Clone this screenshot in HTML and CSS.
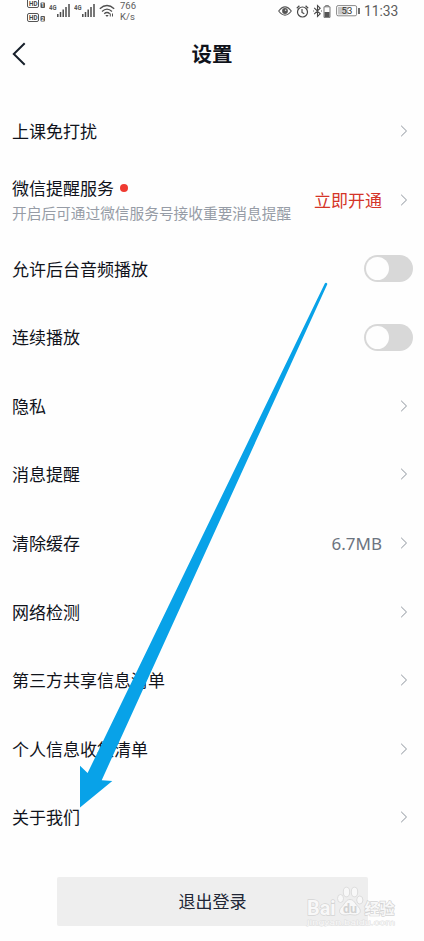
FILE: index.html
```html
<!DOCTYPE html>
<html lang="zh-CN">
<head>
<meta charset="utf-8">
<title>设置</title>
<link rel="stylesheet" href="styles.css">
</head>
<body>
<svg class="defs" aria-hidden="true">
  <symbol id="chevron" viewBox="0 0 8 12"><path d="M1.2 .8 6.5 6 1.2 11.2" fill="none" stroke="#8b929b" stroke-width="1"/></symbol>
  <symbol id="signal" viewBox="0 0 22 18">
    <text x="0" y="9.5" font-size="6.5" font-weight="700" textLength="7.5" lengthAdjust="spacingAndGlyphs" fill="#555">4G</text>
    <path d="M8.8 14v3M11.5 12v5M14.2 9.5v7.5M17 7v10M20 4v13" stroke="#4c4c4c" stroke-width="1.5"/>
  </symbol>
</svg>
<main class="screen">
  <header class="status">
    <div class="status-left">
      <svg class="hd" viewBox="0 0 20 23">
        <g fill="none" stroke="#555" stroke-width="1"><path d="M.5 0v6q0 1.5 1.5 1.5h8q1.5 0 1.5-1.5V0"/><rect x=".5" y="13.5" width="11" height="8" rx="1.5"/></g>
        <g fill="#444" font-weight="700"><text x="2" y="6.4" font-size="7.5" textLength="8.5" lengthAdjust="spacingAndGlyphs">HD</text><text x="2" y="20.3" font-size="7.5" textLength="8.5" lengthAdjust="spacingAndGlyphs">HD</text></g>
        <g fill="#555"><rect x="13.5" y="2.5" width="4.5" height="5.5" rx="1"/><rect x="13.5" y="16" width="4.5" height="5.5" rx="1"/></g>
        <g fill="#fff" font-size="5" font-weight="700"><text x="14.3" y="7.1">1</text><text x="14.3" y="20.6">2</text></g>
      </svg>
      <svg class="signal" viewBox="0 0 22 18"><use href="#signal"/></svg>
      <svg class="signal second" viewBox="0 0 22 18"><use href="#signal"/></svg>
      <svg class="wifi" viewBox="0 0 16 14">
        <g fill="none" stroke="#505050" stroke-width="1.3"><path d="M.8 4.7Q8-1.8 15.2 4.7M3 7.4Q8 2.8 13 7.4M5.2 9.8Q8 7.3 10.8 9.8"/></g>
        <path d="M6.3 11 8 13l1.7-2zM10.8 9.5h1v3h-1zM13 9.5v3h1v-3z" fill="#505050"/>
      </svg>
      <div class="speed">766<br>K/s</div>
    </div>
    <div class="status-right">
      <svg class="eye" viewBox="0 0 14 10"><path d="M.7 5Q7-3.2 13.3 5 7 13.2.7 5z" fill="none" stroke="#555" stroke-width="1.1"/><circle cx="7" cy="5" r="2.9" fill="#555"/><circle cx="7.6" cy="4.2" r=".8" fill="#ddd"/></svg>
      <svg class="alarm" viewBox="0 0 13 13"><g fill="none" stroke="#484848" stroke-width="1.2"><circle cx="6.5" cy="7" r="5"/><path d="M.8 3.2 3.4.8M12.2 3.2 9.6.8M6 4v3.4l2.3 1.4"/></g></svg>
      <svg class="bluetooth" viewBox="0 0 9 14"><path d="m1.2 3.8 6 6L4.5 12.5v-11l2.7 2.7-6 6M.2 7h.9M8 7h.9" fill="none" stroke="#484848" stroke-width="1.1"/></svg>
      <svg class="device" viewBox="0 0 8 13"><path d="M2.5 1.7V.6h3v1.1M1 1.8h6v10.6H1z" fill="none" stroke="#777" stroke-width="1"/><path d="M1.5 7h5v5h-5z" fill="#555"/></svg>
      <svg class="battery" viewBox="0 0 25 12"><rect x=".6" y=".6" width="20" height="10.2" rx="1.5" fill="#fff" stroke="#888"/><path d="M2 2h10v7.5H2z" fill="#c6c6c6"/><path d="M23 3v6" stroke="#555" stroke-width="1.7"/><text x="5.6" y="9.1" font-size="9.5" fill="#333">53</text></svg>
      <span class="time">11:33</span>
    </div>
  </header>
  <nav class="title-bar">
    <svg class="back" viewBox="0 0 14 24"><path d="M12.7 1.2 1.8 12l10.9 10.8" fill="none" stroke="#17202b" stroke-width="2"/></svg>
    <h1>设置</h1>
  </nav>
  <ul class="settings">
    <li><span>上课免打扰</span><svg class="chevron"><use href="#chevron"/></svg></li>
    <li>
      <div class="service"><div class="service-name">微信提醒服务<i class="dot"></i></div><div class="hint">开启后可通过微信服务号接收重要消息提醒</div></div>
      <span class="action">立即开通</span><svg class="chevron"><use href="#chevron"/></svg>
    </li>
    <li><span>允许后台音频播放</span><i class="switch"></i></li>
    <li><span>连续播放</span><i class="switch"></i></li>
    <li><span>隐私</span><svg class="chevron"><use href="#chevron"/></svg></li>
    <li><span>消息提醒</span><svg class="chevron"><use href="#chevron"/></svg></li>
    <li><span>清除缓存</span><span class="size">6.7MB</span><svg class="chevron"><use href="#chevron"/></svg></li>
    <li><span>网络检测</span><svg class="chevron"><use href="#chevron"/></svg></li>
    <li><span>第三方共享信息清单</span><svg class="chevron"><use href="#chevron"/></svg></li>
    <li><span>个人信息收集清单</span><svg class="chevron"><use href="#chevron"/></svg></li>
    <li><span>关于我们</span><svg class="chevron"><use href="#chevron"/></svg></li>
  </ul>
  <button class="logout">退出登录</button>
  <svg class="arrow" viewBox="0 0 424 941"><path d="M324.8 283.4Q326.2 282 327.4 284L101.7 780.2 112.3 781 80 807.5V765.8l7.6 7.2z" fill="#08a2e8"/></svg>
  <svg class="watermark" viewBox="0 0 98 46">
    <g fill="#f8f8f8" stroke="#d6d6d6" stroke-width=".8">
      <ellipse cx="35.5" cy="14.5" rx="3" ry="4"/><ellipse cx="41.5" cy="8" rx="3.2" ry="4.8"/><ellipse cx="49.5" cy="8" rx="3.2" ry="4.8"/><ellipse cx="54.8" cy="16" rx="3.1" ry="4"/>
      <path d="M45 15.5c4 0 5 4 8 7 5 5 1 9-4 8.5q-4-1-8 0c-6 .5-9-3.5-4-8.5 3-3 4-7 8-7z"/>
    </g>
    <g fill="#f8f8f8" stroke="#d4d4d4" stroke-width="1.3" paint-order="stroke" font-weight="700">
      <text x="2" y="30.5" font-size="20" textLength="28.5" lengthAdjust="spacingAndGlyphs">Bai</text>
      <text x="59.5" y="29.5" font-size="15" textLength="30" lengthAdjust="spacingAndGlyphs">经验</text>
    </g>
    <text x="2" y="41.3" font-size="8" fill="#f8f8f8" stroke="#dedede" stroke-width=".8" paint-order="stroke" textLength="88" lengthAdjust="spacingAndGlyphs">jingyan.baidu.com</text>
    <text x="38" y="28.5" font-size="13" font-weight="700" fill="#d2d2d2" textLength="14" lengthAdjust="spacingAndGlyphs">du</text>
  </svg>
</main>
</body>
</html>
```
FILE: styles.css
```css
* { box-sizing: border-box; }
body { margin: 0; background: #fefefe; color: #10131b; font-family: "Noto Sans", "Noto Sans CJK SC", sans-serif; }
svg { display: block; flex: none; font-family: Roboto, "Noto Sans CJK SC", sans-serif; }
.defs { width: 0; height: 0; position: absolute; }
.screen { position: relative; width: 424px; height: 941px; overflow: hidden; }
.status { display: flex; justify-content: space-between; height: 24px; padding: 0 26px 0 27px; font-family: Roboto, sans-serif; color: #5c5c5c; }
.status-left, .status-right { display: flex; }
.status-right { align-items: center; height: 22px; }
.hd { width: 20px; height: 23px; margin-right: 2px; }
.signal { width: 22px; height: 18px; }
.second { margin-left: 3px; }
.wifi { width: 16px; height: 14px; margin: 4px 5px 0 3px; }
.speed { font-size: 9.5px; line-height: 11px; }
.eye { width: 14px; height: 10px; margin-right: 4px; }
.alarm { width: 13px; height: 13px; margin-right: 4px; }
.bluetooth { width: 9px; height: 14px; margin-right: 1px; }
.device { width: 8px; height: 13px; margin-right: 5px; }
.battery { width: 25px; height: 12px; margin-right: 3px; }
.time { font-size: 13.8px; line-height: 22px; width: 34px; white-space: nowrap; }
.title-bar { display: grid; grid-template-columns: 40px 1fr 40px; align-items: center; height: 60px; }
.back { width: 14px; height: 24px; margin-left: 12px; }
h1 { margin: 0; text-align: center; font-size: 20.5px; font-weight: 700; line-height: 30px; }
.settings { list-style: none; margin: 0; padding: 13.2px 11px 0 12px; font-size: 17px; line-height: 24px; }
.settings li { display: flex; align-items: center; height: 68.6px; }
.settings li > :first-child { margin-right: auto; }
.settings li > span { padding-top: 2px; }
.chevron { width: 8px; height: 12px; margin: 0 5.5px 0 17.5px; }
.service { padding-top: 1px; white-space: nowrap; }
.service-name { display: flex; align-items: center; height: 25px; padding-top: 1px; }
.dot { width: 8px; height: 8px; margin: 0 0 2px 6px; border-radius: 50%; background: #ef3a31; }
.hint { font-size: 14.7px; line-height: 25px; color: #969ca6; }
.action { color: #d43428; }
.size { color: #6c7480; }
.switch { display: flex; width: 49px; height: 27px; padding: 2px; border-radius: 14px; background: #d8d8d8; }
.switch::before { content: ""; width: 23px; height: 23px; border-radius: 50%; background: #fefefe; }
.logout { display: block; width: 311px; height: 49px; margin: 25px 0 0 57px; padding: 0 0 2px; border: 0; border-radius: 2px; background: #eee; color: #202535; font: 17px/47px "Noto Sans CJK SC", sans-serif; }
.arrow { position: absolute; left: 0; top: 0; width: 424px; height: 941px; }
.watermark { position: absolute; left: 305px; top: 884px; width: 98px; height: 46px; }
```
